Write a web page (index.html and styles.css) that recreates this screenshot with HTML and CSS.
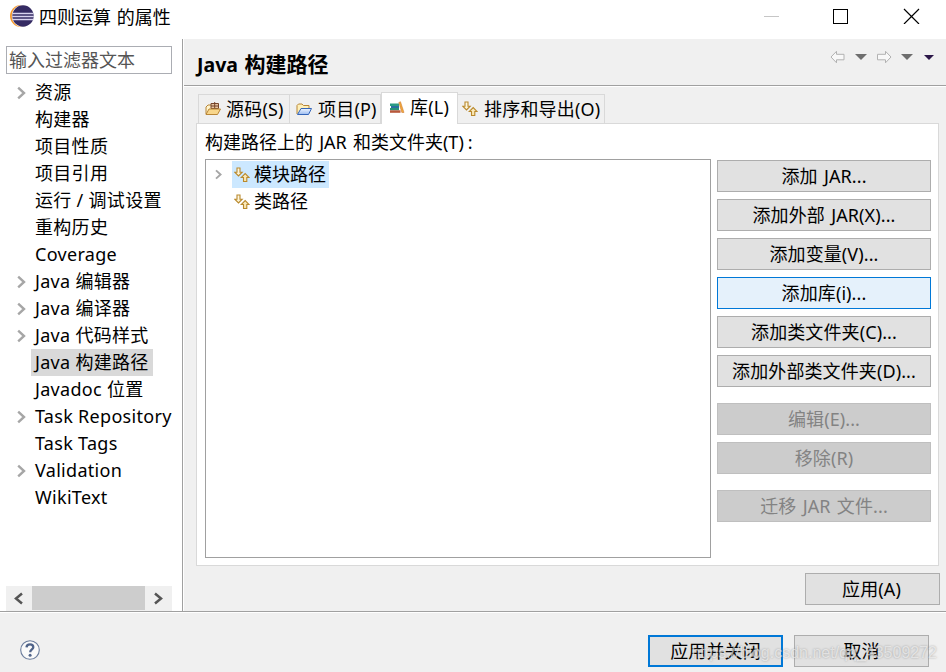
FILE: index.html
```html
<!DOCTYPE html>
<html lang="zh-CN">
<head>
<meta charset="utf-8">
<title>四则运算 的属性</title>
<link rel="stylesheet" href="styles.css">
</head>
<body>
<svg class="defs" width="0" height="0">
  <defs>
    <linearGradient id="gold" x1="0" y1="0" x2="1" y2="1"><stop offset="0" stop-color="#fffdf0"/><stop offset="1" stop-color="#f8e0a0"/></linearGradient>
    <linearGradient id="blue" x1="0" y1="0" x2="0" y2="1"><stop offset="0" stop-color="#eef5ff"/><stop offset="1" stop-color="#9cbcf0"/></linearGradient>
    <symbol id="arrow" viewBox="0 0 10 14"><path d="M1.2 1.700 7 7 1.2 12.300" fill="none" stroke="#a6a6a6" stroke-width="2.4"/></symbol>
    <symbol id="order" viewBox="0 0 16 16"><path d="M3 1h3v4.200h2.200L4.500 9 .8 5.200H3zM9.500 14.500v-4H7.300L11.200 6.500l3.900 4h-2.300v4z" fill="url(#gold)" stroke="#b9892c" stroke-width="1.1"/></symbol>
  </defs>
</svg>
<header class="titlebar">
  <svg class="logo" width="24" height="22" viewBox="0 0 24 22">
    <circle cx="11" cy="11" r="11" fill="#f79a2d"/><circle cx="12.800" cy="11" r="11" fill="#fff"/><circle cx="13" cy="11" r="10.700" fill="#352b63"/>
    <path d="M2.500 8.500h21M2.200 11.500h21.600M2.500 14.500h21" stroke="#d8d2ee" stroke-width="1.400"/>
  </svg>
  <h1>四则运算 的属性</h1>
  <svg class="winbtns" width="156" height="16" viewBox="0 0 156 16" fill="none" shape-rendering="crispEdges">
    <path d="M0 8.500h15" stroke="#c6c6c6"/><rect x="69.500" y="1.500" width="14" height="14" stroke="#000"/>
    <path d="m140 1 15 15m0-15-15 15" stroke="#000" stroke-width="1.200" shape-rendering="auto"/>
  </svg>
</header>
<div class="body">
  <nav class="side">
    <div class="filter">输入过滤器文本</div>
    <ul class="tree">
      <li><svg><use href="#arrow"/></svg><span>资源</span></li>
      <li><span>构建器</span></li>
      <li><span>项目性质</span></li>
      <li><span>项目引用</span></li>
      <li><span>运行 / 调试设置</span></li>
      <li><span>重构历史</span></li>
      <li><span>Coverage</span></li>
      <li><svg><use href="#arrow"/></svg><span>Java 编辑器</span></li>
      <li><svg><use href="#arrow"/></svg><span>Java 编译器</span></li>
      <li><svg><use href="#arrow"/></svg><span>Java 代码样式</span></li>
      <li><span class="picked">Java 构建路径</span></li>
      <li><span>Javadoc 位置</span></li>
      <li><svg><use href="#arrow"/></svg><span>Task Repository</span></li>
      <li><span>Task Tags</span></li>
      <li><svg><use href="#arrow"/></svg><span>Validation</span></li>
      <li><span>WikiText</span></li>
    </ul>
    <div class="scroll">
      <svg width="26" height="24" viewBox="0 0 26 24"><path d="M16 7.500 10 12.500l6 5" fill="none" stroke="#555" stroke-width="2.500"/></svg>
      <div class="thumb"></div>
      <svg width="27" height="24" viewBox="0 0 27 24"><path d="m10 7.500 6 5-6 5" fill="none" stroke="#555" stroke-width="2.500"/></svg>
    </div>
  </nav>
  <main class="page">
    <div class="head">
      <h2><span class="latin">Java</span> 构建路径</h2>
      <svg width="104" height="14" viewBox="0 0 104 14">
        <path d="M1 7 6.500 1.300v3H14v5.500H6.500v3z" fill="#f8f8f8" stroke="#b2b2b2"/>
        <path d="M25 4h12l-6 6z" fill="#6e6e6e"/>
        <path d="M61 7 55.500 1.300v3H47.500v5.500h8v3z" fill="#f8f8f8" stroke="#b2b2b2"/>
        <path d="M71 4h12l-6 6z" fill="#6e6e6e"/>
        <path d="M94 5h10l-5 5z" fill="#2b1748"/>
      </svg>
    </div>
    <div class="tabs">
      <div class="tab t1">
        <svg width="16" height="16" viewBox="0 0 16 16"><path d="M1 13V6l2-2h9v4" fill="#fff3cc" stroke="#b88637"/><path d="M6 2.500h7.500v5H6zM9.700 1v7M6 5h8" fill="#e7c6a3" stroke="#76442b"/><path d="M1 13.500 4 8h11.500l-3 5.500z" fill="#f8d68b" stroke="#b88637"/></svg>
        <span>源码(S)</span></div>
      <div class="tab t2">
        <svg width="16" height="16" viewBox="0 0 16 16"><path d="M1 13V4.500L2.500 3H6l1.500 1.500H13V8" fill="#fff0b9" stroke="#b88637"/><path d="M1.500 13.500 5 7.500h10.500l-3 6z" fill="url(#blue)" stroke="#3465b8"/></svg>
        <span>项目(P)</span></div>
      <div class="tab t3">
        <svg width="16" height="16" viewBox="0 0 16 16"><path d="M1 3.500h9V6H1z" fill="#2a9b83"/><path d="M2 6h8v2H2z" fill="#286da0"/><path d="M1 8h9v2.300H1z" fill="#279276"/><path d="M1 10.300h10.500v2.500H1z" fill="#b8583b"/><path d="m9.800 2.500 1.700-.8L15 12.500h-2.200z" fill="#f0a73c" stroke="#c87028" stroke-width=".5"/></svg>
        <span>库(L)</span></div>
      <div class="tab t4"><svg width="16" height="16"><use href="#order"/></svg><span>排序和导出(O)</span></div>
    </div>
    <section class="panel">
      <p class="label">构建路径上的 JAR 和类文件夹(T)<span class="colon">:</span></p>
      <div class="cols">
        <ul class="list">
          <li><svg class="exp" width="8" height="11"><use href="#arrow"/></svg><span class="entry on"><svg width="16" height="16"><use href="#order"/></svg>模块路径</span></li>
          <li><span class="entry"><svg width="16" height="16"><use href="#order"/></svg>类路径</span></li>
        </ul>
        <div class="actions">
          <button>添加 JAR...</button>
          <button>添加外部 JAR(X)...</button>
          <button>添加变量(V)...</button>
          <button class="hot">添加库(i)...</button>
          <button>添加类文件夹(C)...</button>
          <button>添加外部类文件夹(D)...</button>
          <button class="gap" disabled>编辑(E)...</button>
          <button disabled>移除(R)</button>
          <button class="gap" disabled>迁移 JAR 文件...</button>
        </div>
      </div>
    </section>
    <div class="apply"><button>应用(A)</button></div>
  </main>
</div>
<footer class="foot">
  <svg width="20" height="20" viewBox="0 0 20 20"><circle cx="10" cy="10" r="9.300" fill="#fafafa" stroke="#6a7c9c" stroke-width="1.100"/><path d="M6.500 7.300Q6.700 4.300 10 4.300t3.300 2.900c0 2-3.100 2.300-3.100 5" fill="none" stroke="#50648a" stroke-width="2.300"/><circle cx="10.100" cy="15.200" r="1.500" fill="#50648a"/></svg>
  <div class="btns"><button class="default">应用并关闭</button><button>取消</button></div>
  <div class="mark">https://blog.csdn.net/qq_43509272</div>
</footer>
</body>
</html>
```

FILE: styles.css
```css
* { box-sizing: border-box; }
body {
  margin: 0; width: 946px; height: 672px; overflow: hidden;
  display: flex; flex-direction: column;
  background: #fff; color: #000;
  font: 18px/27px "Noto Sans", "Noto Sans CJK SC", sans-serif;
  white-space: nowrap;
}
h1, h2, p, ul { margin: 0; padding: 0; font-weight: normal; list-style: none; }
svg { flex: none; display: block; }
.defs { position: absolute; }
.titlebar { height: 39px; flex: none; display: flex; align-items: flex-start; padding: 5px 26px 0 10px; }
.titlebar h1 { font-size: 18px; line-height: 24px; margin-left: 5px; word-spacing: 1px; }
.winbtns { margin: 3px 0 0 auto; }
.body { height: 572px; flex: none; display: flex; }
.side { width: 183px; border-right: 1px solid #a0a0a0; padding: 7px 10px 0 6px; display: flex; flex-direction: column; }
.filter { width: 166px; height: 28px; border: 1px solid #abadb3; padding-left: 2px; color: #555; line-height: 27px; }
.tree { margin-top: 5px; letter-spacing: .3px; }
.tree li { height: 27px; display: flex; align-items: center; padding-left: 25px; }
.tree li svg { width: 10px; height: 14px; margin: 1px 4px 0 -14px; }
.tree span { padding: 0 4px; height: 27px; }
.tree .picked { background: #d9d9d9; }
.scroll { width: 166px; height: 25px; margin-top: auto; background: #f0f0f0; display: flex; }
.thumb { width: 113px; height: 24px; background: #cdcdcd; }
.page { flex: 1; background: #f0f0f0; border-left: 1px solid #fff; }
.head { height: 48px; border-bottom: 1px solid #fff; box-shadow: inset 0 -1px #a0a0a0; display: flex; justify-content: space-between; padding: 12px 12px 0 13px; }
.head h2 { font-size: 21px; font-weight: bold; word-spacing: 1px; }
.latin { font-size: 19.5px; }
.head svg { margin-top: -1px; }
.tabs { height: 36px; display: flex; align-items: flex-end; padding-left: 14px; }
.tab { height: 29px; display: flex; align-items: center; border: 1px solid #d9d9d9; border-bottom: 0; padding-left: 6px; }
.tab span { margin-left: 5px; letter-spacing: .2px; }
.t1 { width: 92px; }
.t2 { width: 91px; border-left: 0; }
.t2 span, .t4 span { margin-left: 6px; }
.t3 { width: 77px; height: 32px; margin-bottom: -1px; padding: 0 0 2px 7px; background: #fff; position: relative; }
.t4 { width: 147px; border-left: 0; padding-left: 4px; }
.panel { width: 743px; height: 443px; margin-left: 12px; background: #fff; border: 1px solid #d9d9d9; padding: 5px 6px 0 8px; }
.label { height: 30px; word-spacing: 1.5px; }
.colon { margin-left: 4px; }
.cols { display: flex; gap: 6px; }
.list { width: 506px; height: 399px; border: 1px solid #a0a0a0; padding-top: 1px; }
.list li { height: 27px; display: flex; align-items: center; padding-left: 26px; }
.exp { margin: 0 9px 0 -17px; }
.entry { height: 27px; display: flex; align-items: center; gap: 4px; padding: 0 3px 0 2px; }
.entry svg { margin-right: 0; }
.on { background: #cce8ff; }
.actions { display: flex; flex-direction: column; gap: 7px; padding-top: 1px; }
button {
  width: 214px; height: 32px; padding: 0; border: 1px solid #adadad; background: #e1e1e1;
  color: #000; font: inherit; line-height: 28px; letter-spacing: .1px; word-spacing: 1.5px;
}
.actions .hot { border-color: #0078d7; background: #e5f1fb; }
.actions button:disabled { background: #ccc; border-color: #bfbfbf; color: #838383; }
.actions .gap { margin-top: 9px; }
.apply { display: flex; justify-content: flex-end; padding: 7px 6px 0; }
.apply button, .btns button { width: 135px; }
.apply button { padding-right: 2px; }
.foot { position: relative; flex: 1; background: #f0f0f0; border-top: 1px solid #a0a0a0; box-shadow: inset 0 1px #fff; display: flex; justify-content: space-between; align-items: flex-start; padding: 23px 17px 0 20px; }
.foot > svg { margin-top: 5px; }
.btns { display: flex; gap: 11px; }
.btns .default { border: 2px solid #0078d7; }
.mark { position: absolute; right: 9px; top: 29px; font: 16px/24px "Liberation Sans", sans-serif; color: rgba(255,255,255,.6); text-shadow: 0 0 2px rgba(110,110,110,.6); }
```
